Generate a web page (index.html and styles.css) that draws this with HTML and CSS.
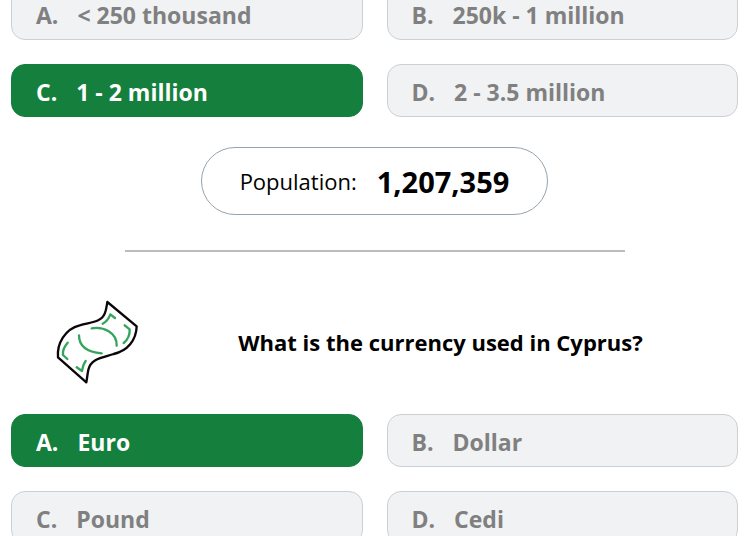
FILE: index.html
```html
<!DOCTYPE html>
<html lang="en">
<head>
  <meta charset="UTF-8">
  <meta name="viewport" content="width=device-width, initial-scale=1.0">
  <title>Country Quiz - Cyprus</title>
  <link rel="stylesheet" href="styles.css">
</head>
<body>
  <main class="quiz">
    <section class="question">
      <div class="options">
        <button type="button" class="option"><span class="letter">A.</span>&lt; 250 thousand</button>
        <button type="button" class="option"><span class="letter">B.</span>250k - 1 million</button>
        <button type="button" class="option correct"><span class="letter">C.</span>1 - 2 million</button>
        <button type="button" class="option"><span class="letter">D.</span>2 - 3.5 million</button>
      </div>
      <p class="answer">Population: <strong class="answer-value">1,207,359</strong></p>
    </section>

    <hr class="divider">

    <section class="question">
      <div class="question-header">
        <svg class="question-icon" viewBox="45 27 252 255" fill="none" stroke-linecap="round" stroke-linejoin="round" aria-hidden="true">
          <path stroke="#0b0709" stroke-width="7" d="M202 36 L290 109 C289 151 262 183 221 192 C186 203 153 205 145 239 C142 254 141 267 139 277 L54 202 C50 161 75 117 119 106 C152 96 184 97 194 71 C199 60 200 48 202 36 Z"/>
          <g stroke="#35a45c" stroke-width="7">
            <path d="M155 115 C190 109 231 127 230 167"/>
            <path d="M117 136 C117 172 148 187 185 190"/>
            <path d="M188 101 C201 94 207 84 211 73 L225 84"/>
            <path d="M254 106 L269 118 C270 138 263 149 251 159"/>
            <path d="M83 158 C74 168 67 178 69 195 L82 207"/>
            <path d="M137 213 C130 222 128 232 126 243 L110 232"/>
          </g>
        </svg>
        <h2 class="question-title">What is the currency used in Cyprus?</h2>
      </div>
      <div class="options">
        <button type="button" class="option correct"><span class="letter">A.</span>Euro</button>
        <button type="button" class="option"><span class="letter">B.</span>Dollar</button>
        <button type="button" class="option"><span class="letter">C.</span>Pound</button>
        <button type="button" class="option"><span class="letter">D.</span>Cedi</button>
      </div>
    </section>
  </main>
</body>
</html>
```

FILE: styles.css
```css
* {
  box-sizing: border-box;
}
body {
  margin: 0;
  height: 100vh;
  overflow: hidden;
  background-color: #fff;
  color: #000;
  font-family: "Segoe UI", "Open Sans", sans-serif;
}
.quiz {
  margin-top: -13px;
  padding: 0 12px 0 11px;
}
.options {
  display: grid;
  grid-template-columns: 1fr 1fr;
  gap: 24px;
}
.option {
  height: 53px;
  padding: 3px 24px 0;
  border: 1px solid #cbd0d5;
  border-radius: 14px;
  background-color: #f0f2f4;
  color: #808080;
  font-family: inherit;
  font-size: 23px;
  font-weight: 700;
  line-height: 32px;
  text-align: left;
}
.option.correct {
  border-color: #15803d;
  background-color: #15803d;
  color: #fff;
}
.letter {
  margin-right: 19px;
}
.answer {
  display: flex;
  align-items: center;
  gap: 20px;
  width: fit-content;
  height: 68px;
  margin: 30px auto 35px;
  padding: 0 38px;
  border: 1px solid #94a3b0;
  border-radius: 34px;
  font-size: 22px;
}
.answer-value {
  font-size: 29px;
  font-weight: 700;
}
.divider {
  width: 500px;
  max-width: 90%;
  margin: 0 auto;
  border: 0;
  border-top: 2px solid #bcbcbc;
}
.question-header {
  display: flex;
  align-items: center;
  padding: 47px 0 30px 44px;
}
.question-icon {
  flex: none;
  width: 84px;
  height: 85px;
}
.question-title {
  flex: 1;
  margin: 0;
  padding-left: 4px;
  font-size: 22px;
  font-weight: 700;
  line-height: 32px;
  text-align: center;
}
```
